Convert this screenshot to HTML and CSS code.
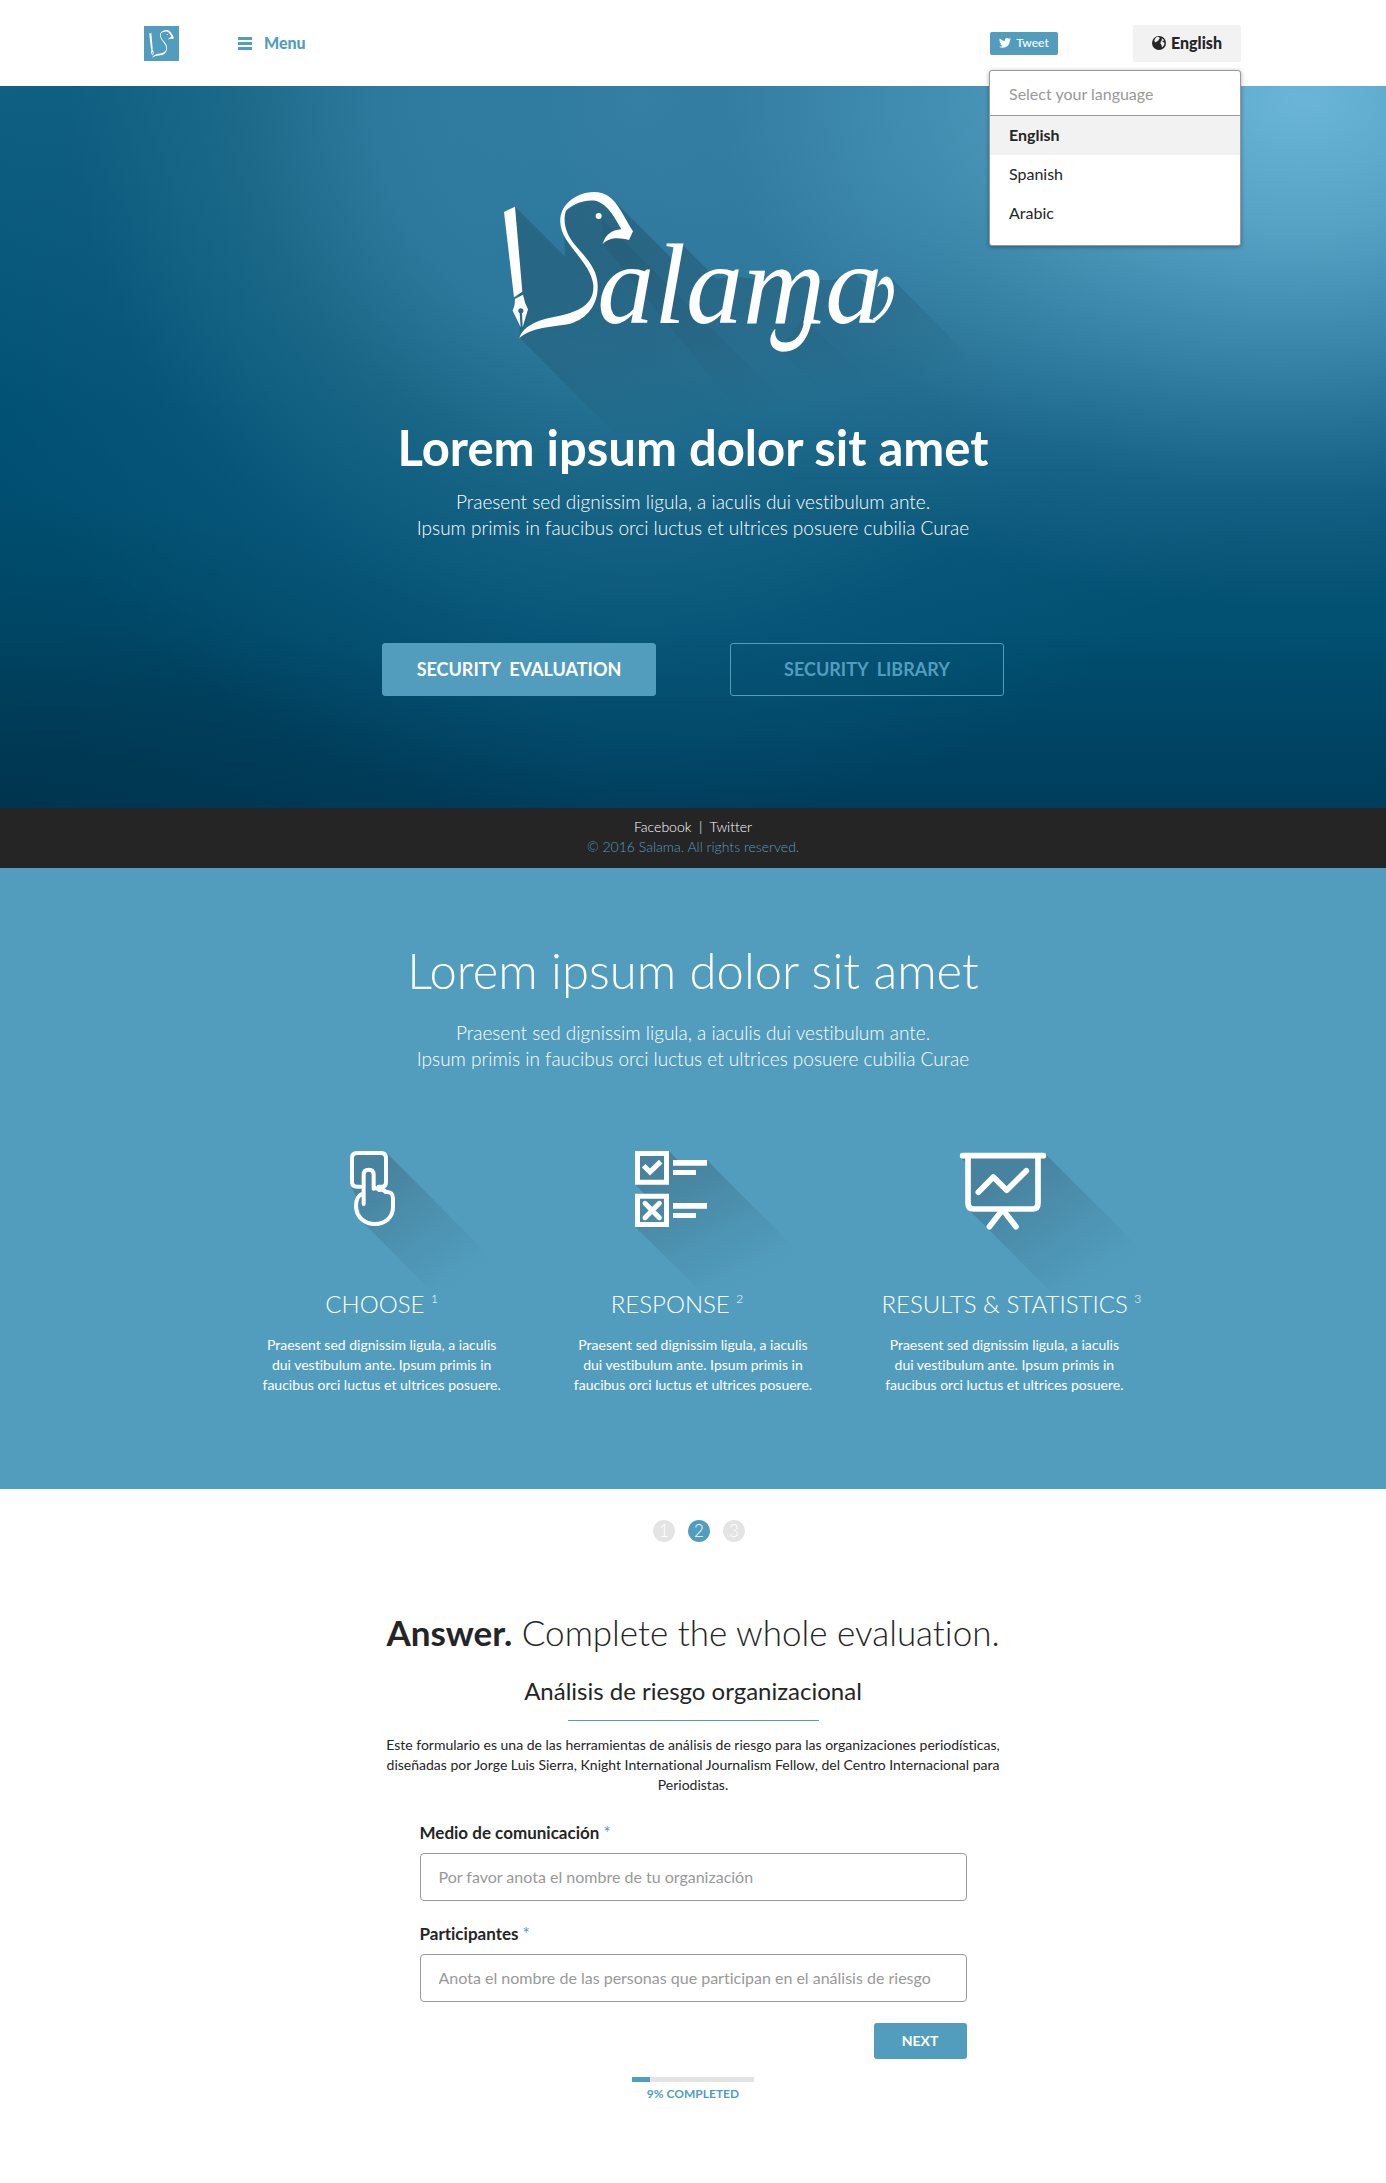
FILE: index.html
```html
<!DOCTYPE html>
<html lang="en">
<head>
<meta charset="utf-8">
<meta name="viewport" content="width=device-width, initial-scale=1">
<title>Salama</title>
<link rel="stylesheet" href="styles.css">
</head>
<body>
<svg class="defs" width="0" height="0" aria-hidden="true">
  <symbol id="mark" overflow="visible">
    <path d="M72 126 105 110 127 365 102 382Z"/>
    <path fill-rule="evenodd" d="M105 387 129 374Q134 400 144 418L128 472 126 430A8 8 0 1 0 119 430L122 472 98 422Q106 405 105 387Z"/>
    <path d="M118 504C130 465 180 447 240 437C310 422 343 395 340 345C335 295 285 250 258 208C232 165 236 125 265 97C290 73 330 60 365 69C408 83 420 120 459 184L447 210C420 202 385 200 368 223C375 195 395 180 424 178C405 145 385 105 350 93C310 87 275 105 258 122C248 150 255 190 285 225C315 260 352 295 353 345C355 400 325 445 270 461C210 472 160 470 118 504Z"/>
    <circle cx="356" cy="138" r="9"/>
  </symbol>
</svg>

<header class="header">
  <div class="header-inner">
    <a class="brand" href="#" aria-label="Salama"><svg viewBox="-10 5 550 550"><use href="#mark"/></svg></a>
    <button class="menu" type="button"><span class="bars"></span>Menu</button>
    <button class="tweet" type="button">
      <svg viewBox="0 0 24 20" aria-hidden="true"><path d="M24 2.4a10 10 0 0 1-2.8.8A5 5 0 0 0 23.300.5a10 10 0 0 1-3.100 1.200A4.900 4.900 0 0 0 11.800 6.100 14 14 0 0 1 1.700 1a4.900 4.900 0 0 0 1.500 6.600A5 5 0 0 1 1 7v.1a4.900 4.900 0 0 0 3.900 4.800 5 5 0 0 1-2.200.1 4.900 4.900 0 0 0 4.600 3.400A10 10 0 0 1 0 17.500 14 14 0 0 0 7.500 19.700c9.100 0 14-7.500 14-14v-.7A10 10 0 0 0 24 2.400Z"/></svg>Tweet
    </button>
    <div class="language">
      <button class="language-toggle" type="button" aria-expanded="true">
        <svg viewBox="0 0 14 14" aria-hidden="true"><circle cx="7" cy="7" r="7" fill="#252525"/><path fill="#f2f2f2" d="M5 .8 7.200 1.300 7.800 2.600 6.800 3.200 6.900 4.200 5.600 4.700 5 5.800 3.800 5.500 4.200 6.800 2.800 5.800 2.300 4.300Q3.200 2 5 .8ZM9.800 2.200 11.800 3.800 12 5 10.800 4.600 10.400 5.800 12.600 6.800 12 9.300 10 11.400 9.400 8.700 8.300 7.300 9 5.300 9.800 4.200Z"/></svg>English
      </button>
      <div class="language-list">
        <p>Select your language</p>
        <button class="current" type="button">English</button>
        <button type="button">Spanish</button>
        <button type="button">Arabic</button>
      </div>
    </div>
  </div>
</header>

<main>
  <section class="hero">
    <svg class="logo" viewBox="-231 0 1740 720" role="img" aria-label="Salama">
      <defs>
        <linearGradient id="fade" gradientUnits="userSpaceOnUse" x1="500" y1="250" x2="640" y2="790">
          <stop offset="0" stop-color="#1f4a5e" stop-opacity=".4"/>
          <stop offset=".5" stop-color="#1f4a5e" stop-opacity=".26"/>
          <stop offset="1" stop-color="#1f4a5e" stop-opacity="0"/>
        </linearGradient>
      </defs>
      <path fill="url(#fade)" d="M105 110 255 260 250 130 330 75 400 90 430 120 575 265 605 222 710 327 760 320 850 330 900 312 985 330 1060 330 1120 308 1180 360 1235 325 1700 790H405L120 505Z"/>
      <path fill="url(#fade)" opacity=".5" d="M365 145 1010 790H830L370 225Z M970 440 1320 790H1150L900 540Z"/>
      <g fill="#fff">
        <use href="#mark"/>
        <text x="352" y="458">alama</text>
        <path d="M996 440C990 500 960 545 910 545C865 542 862 500 886 476C882 505 895 520 925 517C955 512 970 480 974 445Z"/>
        <path d="M1185 455C1225 430 1248 385 1240 345C1232 310 1205 310 1192 352C1205 335 1220 340 1224 360C1228 395 1208 430 1178 446Z"/>
      </g>
    </svg>
    <h1>Lorem ipsum dolor sit amet</h1>
    <p class="lead">Praesent sed dignissim ligula, a iaculis dui vestibulum ante.<br>Ipsum primis in faucibus orci luctus et ultrices posuere cubilia Curae</p>
    <div class="actions">
      <a class="action solid" href="#evaluation">SECURITY&nbsp; EVALUATION</a>
      <a class="action" href="#library">SECURITY&nbsp; LIBRARY</a>
    </div>
  </section>

  <div class="legal">
    <p><a href="#">Facebook</a> &nbsp;|&nbsp; <a href="#">Twitter</a></p>
    <p class="copyright">© 2016 Salama. All rights reserved.</p>
  </div>

  <section class="features">
    <h2>Lorem ipsum dolor sit amet</h2>
    <p class="lead">Praesent sed dignissim ligula, a iaculis dui vestibulum ante.<br>Ipsum primis in faucibus orci luctus et ultrices posuere cubilia Curae</p>
    <div class="columns">
      <article>
        <svg viewBox="-174 60 720 228" aria-hidden="true">
          <defs>
            <linearGradient id="fade1" gradientUnits="userSpaceOnUse" x1="150" y1="150" x2="400" y2="480">
              <stop offset="0" stop-color="#3a6478" stop-opacity=".45"/><stop offset="1" stop-color="#3a6f8a" stop-opacity="0"/>
            </linearGradient>
          </defs>
          <path fill="url(#fade1)" d="M200 69 560 429V580H431L130 279 108 200 95 172V70Z"/>
          <g fill="none" stroke="#fff" stroke-width="12" stroke-linecap="round" stroke-linejoin="round">
            <path d="M122 170H111Q96 170 96 155V84Q96 69 111 69H183Q198 69 198 84V155Q198 170 186 170H176"/>
            <path d="M131 222V134Q131 119 146 119T161 134V176Q170 172 178 180 190 176 197 186 219 184 219 205V232C219 262 195 282 165 282S108 262 108 228Q108 200 125 192"/>
          </g>
        </svg>
        <h3>CHOOSE <sup>1</sup></h3>
        <p>Praesent sed dignissim ligula, a iaculis dui vestibulum ante. Ipsum primis in faucibus orci luctus et ultrices posuere.</p>
      </article>
      <article class="response">
        <svg viewBox="-81 60 720 228" aria-hidden="true">
          <defs>
            <linearGradient id="fade2" gradientUnits="userSpaceOnUse" x1="180" y1="150" x2="360" y2="500">
              <stop offset="0" stop-color="#3a6478" stop-opacity=".45"/><stop offset="1" stop-color="#3a6f8a" stop-opacity="0"/>
            </linearGradient>
          </defs>
          <path fill="url(#fade2)" d="M207 64 234 91H321L660 430V580H398L105 290V192H133L105 163V64Z"/>
          <path fill="#fff" fill-rule="evenodd" d="M105 63H207V164H105ZM120 78V149H192V78ZM105 191H207V291H105ZM120 206V276H192V206ZM219 90H321V107H219ZM219 120H288V135H219ZM219 219H321V236H219ZM219 249H288V264H219Z"/>
          <g fill="none" stroke="#fff" stroke-width="15"><path d="M131 107 150 126 182 95"/><path stroke-linecap="round" d="M135 220 178 263M178 220 135 263"/></g>
        </svg>
        <h3>RESPONSE <sup>2</sup></h3>
        <p>Praesent sed dignissim ligula, a iaculis dui vestibulum ante. Ipsum primis in faucibus orci luctus et ultrices posuere.</p>
      </article>
      <article class="results">
        <svg viewBox="42 60 720 228" aria-hidden="true">
          <defs>
            <linearGradient id="fade3" gradientUnits="userSpaceOnUse" x1="380" y1="170" x2="620" y2="510">
              <stop offset="0" stop-color="#3a6478" stop-opacity=".45"/><stop offset="1" stop-color="#3a6f8a" stop-opacity="0"/>
            </linearGradient>
          </defs>
          <path fill="url(#fade3)" d="M273 84 287 98V230L355 298 640 583H860V405L526 71H275Z"/>
          <g fill="none" stroke="#fff" stroke-width="17" stroke-linecap="round" stroke-linejoin="round">
            <path d="M278 77H520M294 80V220Q294 237 311 237H488Q504 237 504 220V80M325 187 370 141 410 181 469 122M393 245 358 290M403 245 438 290"/>
          </g>
        </svg>
        <h3>RESULTS &amp; STATISTICS <sup>3</sup></h3>
        <p>Praesent sed dignissim ligula, a iaculis dui vestibulum ante. Ipsum primis in faucibus orci luctus et ultrices posuere.</p>
      </article>
    </div>
  </section>

  <section class="evaluation" id="evaluation">
    <ol class="steps"><li>1</li><li class="active">2</li><li>3</li></ol>
    <h2><b>Answer.</b> Complete the whole evaluation.</h2>
    <h3>Análisis de riesgo organizacional</h3>
    <p class="intro">Este formulario es una de las herramientas de análisis de riesgo para las organizaciones periodísticas, diseñadas por Jorge Luis Sierra, Knight International Journalism Fellow, del Centro Internacional para Periodistas.</p>
    <form>
      <label for="media">Medio de comunicación <span>*</span></label>
      <input id="media" type="text" placeholder="Por favor anota el nombre de tu organización">
      <label for="people">Participantes <span>*</span></label>
      <input id="people" type="text" placeholder="Anota el nombre de las personas que participan en el análisis de riesgo">
      <button type="submit">NEXT</button>
    </form>
    <div class="progress"><div class="progress-value" style="width:15%"></div></div>
    <p class="progress-label">9% COMPLETED</p>
  </section>
</main>
</body>
</html>
```
FILE: styles.css
```css
* { box-sizing: border-box; }
body { margin: 0; font-family: Lato, "Liberation Sans", sans-serif; font-size: 14px; line-height: 20px; font-variant-ligatures: none; color: #252525; background: #fff; }
h1, h2, h3, p, ol { margin: 0; padding: 0; }
button { font: inherit; color: inherit; border: 0; padding: 0; background: none; cursor: pointer; }
a { color: inherit; text-decoration: none; }
.defs { position: absolute; }

/* Header */
.header-inner { display: flex; align-items: center; max-width: 1098px; height: 86px; margin: 0 auto; padding-right: 1px; }
.brand { width: 35px; height: 35px; background: #529dbe; }
.brand svg { display: block; width: 35px; height: 35px; fill: #fff; }
.menu { display: flex; align-items: center; gap: 12px; margin-left: 59px; font-size: 16px; font-weight: 900; color: #529dbe; }
.bars { width: 14px; height: 13px; border: solid #529dbe; border-width: 3px 0; background: linear-gradient(#529dbe, #529dbe) center / 14px 3px no-repeat; }
.tweet { display: flex; align-items: center; justify-content: center; gap: 5px; width: 68px; height: 23px; margin-left: auto; border-radius: 2px; background: #529dbe; color: #fff; font-size: 12px; font-weight: 500; }
.tweet svg { width: 12px; height: 10px; fill: #fff; }
.language { position: relative; margin-left: 75px; }
.language-toggle { display: flex; align-items: center; justify-content: center; gap: 5px; width: 108px; height: 37px; border-radius: 2px; background: #f2f2f2; font-size: 16px; font-weight: 900; }
.language-toggle svg { width: 14px; height: 14px; }
.language-list { position: absolute; z-index: 1; top: 45px; right: 0; width: 252px; padding-bottom: 12px; border: 1px solid #999; border-radius: 3px; background: #fff; box-shadow: 0 1px 4px rgba(0, 0, 0, .35); font-size: 16px; }
.language-list p { padding: 13px 19px 11px; border-bottom: 1px solid #999; color: #999; }
.language-list button { display: block; width: 100%; height: 39px; padding: 0 19px; text-align: left; }
.language-list .current { background: #f2f2f2; font-weight: 700; }

/* Hero */
.hero { display: flex; flex-direction: column; align-items: center; padding: 84px 24px 112px; color: #fff; text-align: center;
  background:
    radial-gradient(ellipse 62% 80% at 94% 2%, #6ab5d8 0, rgba(93, 170, 205, .9) 22%, rgba(75, 151, 187, .72) 44%, rgba(50, 120, 158, .4) 68%, rgba(20, 95, 130, .12) 88%, rgba(0, 79, 114, 0) 100%),
    radial-gradient(ellipse 54% 100% at 46% 2%, #3882a8 0, rgba(48, 124, 160, .9) 35%, rgba(34, 110, 142, .75) 52%, rgba(16, 94, 130, .4) 76%, rgba(0, 79, 114, 0) 100%),
    radial-gradient(ellipse 45% 45% at 0 100%, rgba(0, 46, 68, .6), rgba(0, 46, 68, 0)),
    linear-gradient(#0f6082, #005073 45%, #004e70 76%, #003d5c); }
.logo { display: block; width: 580px; height: 240px; overflow: visible; }
.logo text { font-family: "Liberation Serif", serif; font-style: italic; font-size: 342px; }
h1 { margin-top: 5px; font-size: 49px; line-height: 64px; font-weight: 700; }
.lead { font-size: 19px; line-height: 26px; font-weight: 300; }
.hero .lead { margin-top: 10px; }
.actions { display: flex; gap: 74px; margin-top: 102px; }
.action { width: 274px; border: 1px solid #529dbe; border-radius: 3px; font-size: 18px; line-height: 51px; font-weight: 700; color: #529dbe; }
.action.solid { background: #529dbe; color: #fff; }

.legal { padding: 9px 0 11px; background: #252525; color: #fff; text-align: center; font-weight: 300; }
.copyright { color: #529dbe; }

/* Features */
.features { padding: 70px 24px 94px; background: #529dbe; color: #fff; text-align: center; }
.features h2 { font-size: 49px; line-height: 64px; font-weight: 300; }
.features .lead { margin-top: 18px; }
.columns { display: grid; grid-template-columns: repeat(3, 1fr); max-width: 934px; margin: 78px auto 0; }
.columns svg { display: block; width: 240px; height: 76px; margin: 0 auto; overflow: visible; }
.columns h3 { margin-top: 62px; font-size: 24px; line-height: 32px; font-weight: 300; }
.response h3 { padding-right: 32px; }
.results h3 { padding-left: 14px; }
.columns sup { font-size: 12px; line-height: 12px; vertical-align: 10px; }
.columns p { width: 250px; margin: 15px auto 0; }

/* Evaluation */
.evaluation { padding: 31px 24px 79px; text-align: center; }
.steps { display: flex; justify-content: center; gap: 13px; padding-left: 12px; list-style: none; }
.steps li { width: 22px; height: 22px; border-radius: 50%; background: #e4e4e4; color: #fff; font-size: 17px; line-height: 21px; font-weight: 300; }
.steps .active { background: #529dbe; }
.evaluation h2 { margin-top: 67px; font-size: 35px; line-height: 46px; font-weight: 300; }
.evaluation h2 b { font-weight: 700; }
.evaluation h3 { margin-top: 20px; font-size: 24px; line-height: 32px; font-weight: 400; }
.evaluation h3::after { content: ""; display: block; width: 251px; height: 1px; margin: 13px auto 0; background: #529dbe; }
.intro { max-width: 640px; margin: 14px auto 0; }
form { display: flex; flex-direction: column; max-width: 547px; margin: 26px auto 0; text-align: left; }
label { margin-bottom: 8px; font-size: 17px; line-height: 24px; font-weight: 700; }
label span { color: #529dbe; font-weight: 400; }
input { height: 48px; margin-bottom: 21px; padding: 0 18px 2px; border: 1px solid #999; border-radius: 4px; background: #fff; color: inherit; font: inherit; font-size: 16px; }
input::placeholder { color: #999; opacity: 1; }
form button { align-self: flex-end; width: 93px; height: 36px; border-radius: 3px; background: #529dbe; color: #fff; font-size: 14px; font-weight: 700; }
.progress { width: 122px; margin: 18px auto 0; background: #e4e4e4; }
.progress-value { height: 5px; background: #529dbe; }
.progress-label { margin-top: 2px; font-size: 12px; font-weight: 700; color: #529dbe; }
```
